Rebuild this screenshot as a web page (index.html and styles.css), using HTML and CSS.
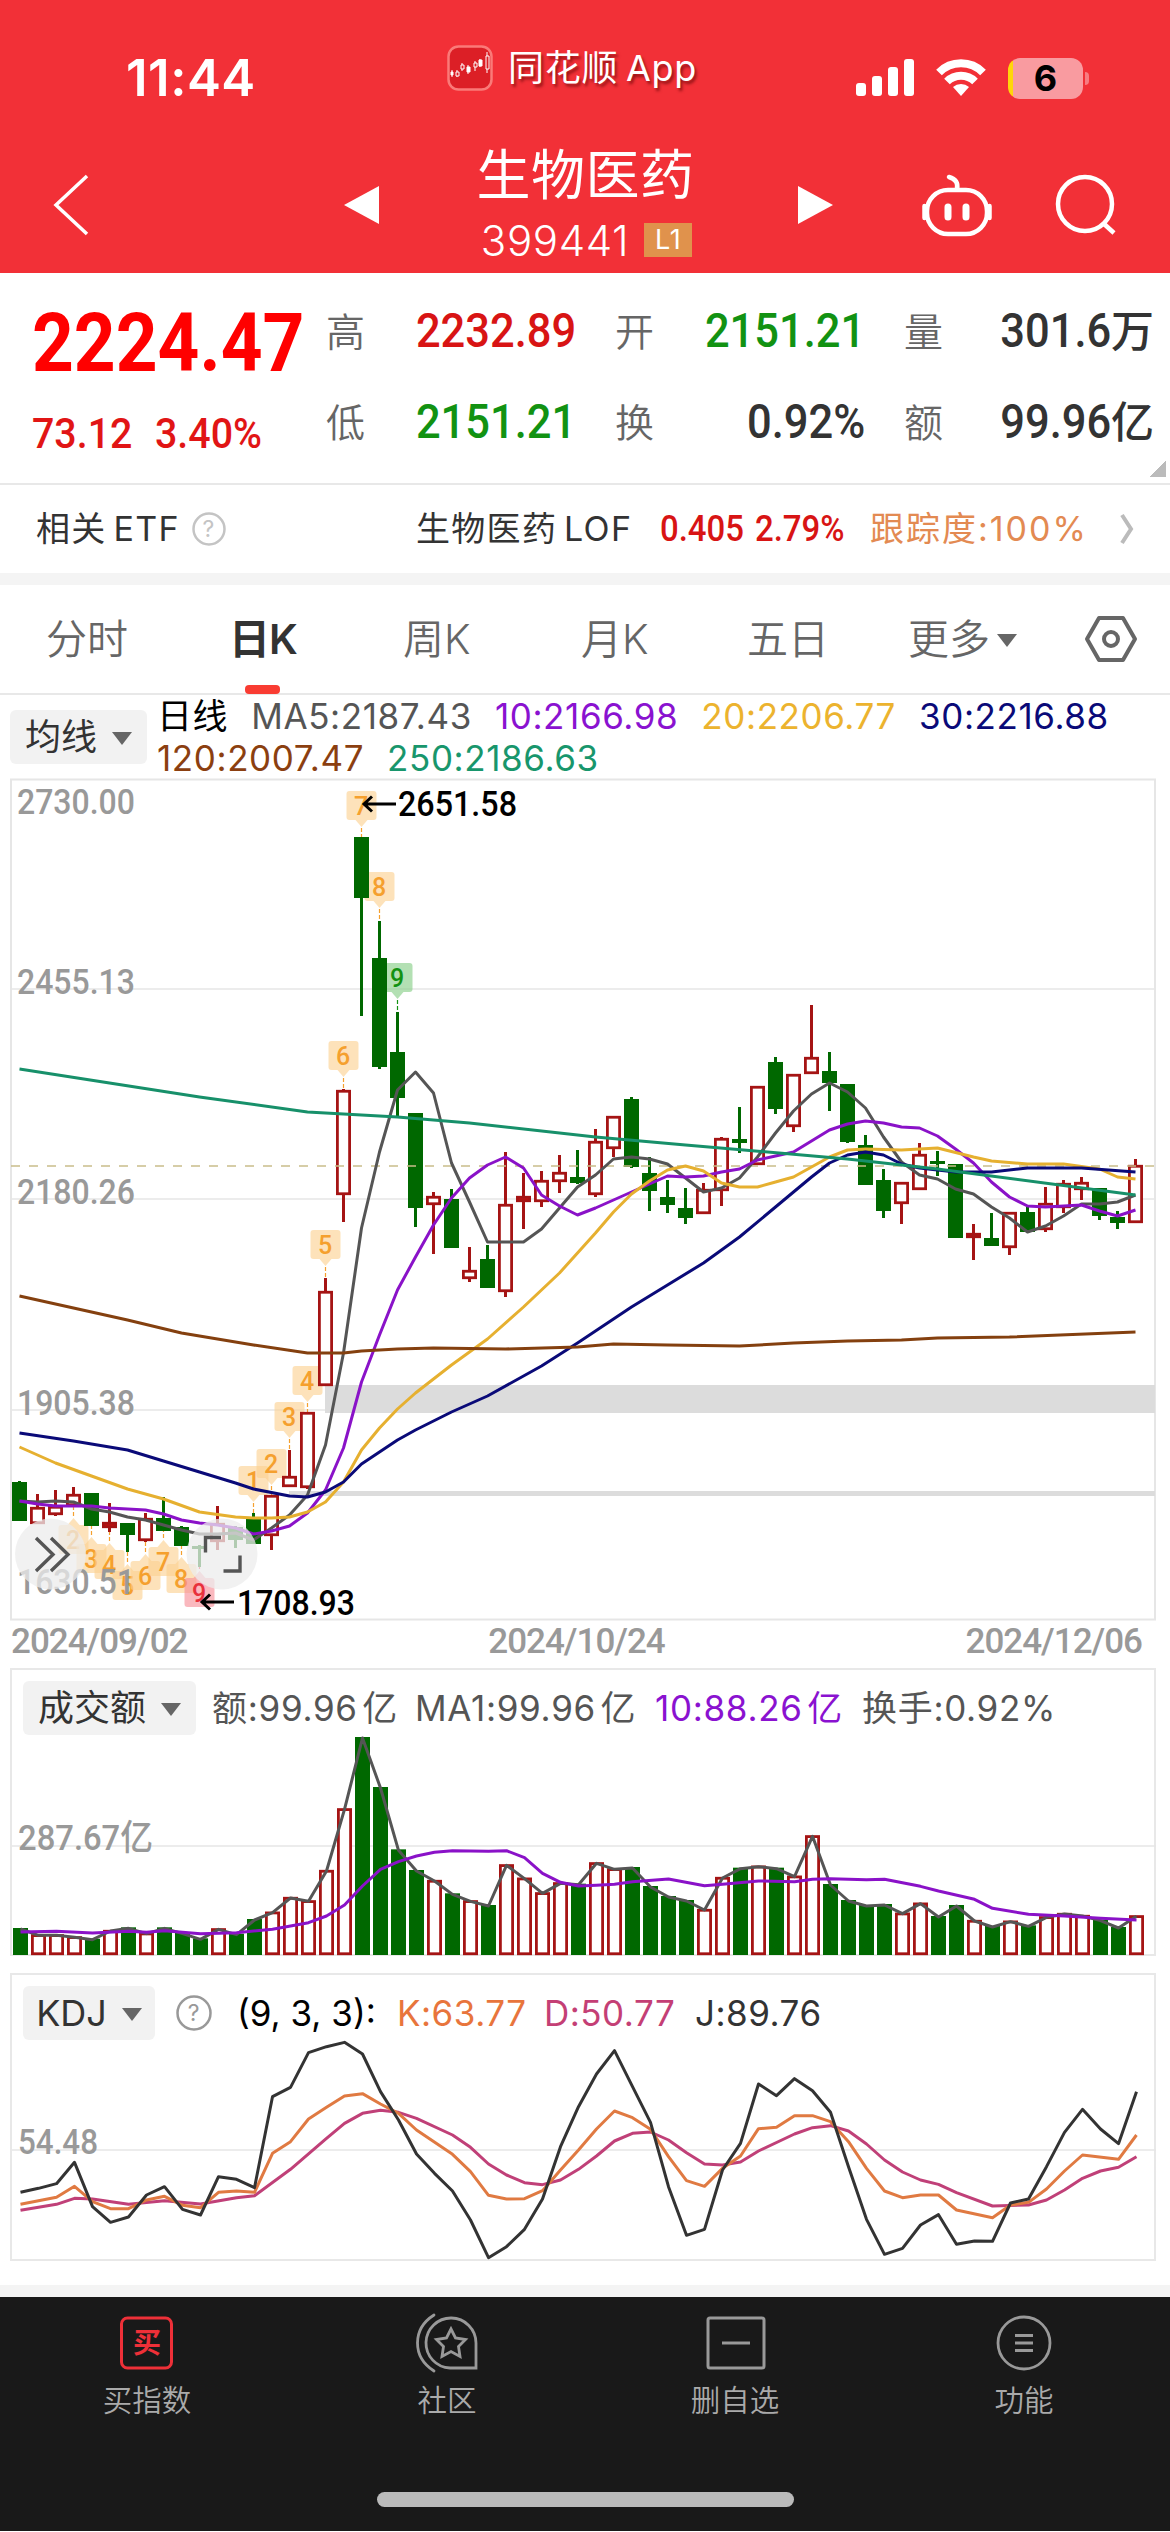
FILE: index.html
```html
<!DOCTYPE html>
<html lang="zh-CN">
<head>
    <meta charset="UTF-8">
    <meta name="viewport" content="width=device-width, initial-scale=1.0">
    <title>生物医药 399441</title>
    <link rel="stylesheet" href="styles.css">
</head>
<body>
    <header class="header">
        <div class="status">
            <span class="time">11:44</span>
            <div class="from-app">
                <svg width="46" height="46" viewBox="0 0 46 46">
                    <rect x="1.5" y="1.5" width="43" height="43" rx="10" fill="#dc1f26" stroke="#fa7a78" stroke-width="2.5"/>
                    <g stroke="#fff" stroke-width="1" fill="#fff">
                        <path d="M5 25v7M10 25v7M15 18v8M21 20v9M28 16v10M33 14v8M40 7v21" fill="none"/>
                        <path d="M4 27h2v3h-2zM20 22h3v5h-3zM32 15h3v6h-3z"/>
                        <path d="M9 27h3v4h-3zM14 20h3v4h-3zM27 18h3v4h-3zM39 11h3v13h-3z" fill="#dc1f26"/>
                    </g>
                </svg>
                <span>同花顺 App</span>
            </div>
            <div class="signals">
                <svg width="58" height="38" viewBox="0 0 58 38" fill="#fff">
                    <rect x="0" y="24" width="10" height="13" rx="3"/>
                    <rect x="16" y="17" width="10" height="20" rx="3"/>
                    <rect x="32" y="8" width="10" height="29" rx="3"/>
                    <rect x="48" y="0" width="10" height="37" rx="3"/>
                </svg>
                <svg width="50" height="38" viewBox="0 0 50 38" fill="none" stroke="#fff" stroke-width="8">
                    <path d="M3 13.500a31 31 0 0 1 44 0"/>
                    <path d="M11 22.500a20 20 0 0 1 28 0"/>
                    <path d="M25 37l-8-9a12 12 0 0 1 16 0z" fill="#fff" stroke="none"/>
                </svg>
                <div class="battery"><span>6</span></div>
            </div>
        </div>
        <nav class="nav">
            <svg class="back" width="36" height="62" viewBox="0 0 36 62" fill="none" stroke="#fff" stroke-width="3.500">
                <path d="M34 2L3 31l31 29"/>
            </svg>
            <svg class="prev" width="35" height="38" viewBox="0 0 35 38"><path d="M35 0v38L0 19z" fill="#fff"/></svg>
            <div class="title">
                <h1>生物医药</h1>
                <p><span>399441</span><em>L1</em></p>
            </div>
            <svg class="next" width="35" height="38" viewBox="0 0 35 38"><path d="M0 0v38L35 19z" fill="#fff"/></svg>
            <svg class="robot" width="70" height="64" viewBox="0 0 70 64" fill="none" stroke="#fff" stroke-width="4.500" stroke-linecap="round">
                <rect x="5" y="17" width="60" height="44" rx="21"/>
                <path d="M2.500 33v12M67.500 33v12M35 16q2-9-8-12"/>
                <path d="M26 34v10M44 34v10" stroke-width="7"/>
            </svg>
            <svg class="search" width="62" height="62" viewBox="0 0 62 62" fill="none" stroke="#fff" stroke-width="4.500">
                <circle cx="30" cy="30" r="27"/>
                <path d="M48 49l11 10"/>
            </svg>
        </nav>
    </header>

    <section class="quote">
        <div class="price">
            <strong class="num">2224.47</strong>
            <p><span class="num">73.12</span><span class="num">3.40%</span></p>
        </div>
        <dl class="stats">
            <div><dt>高</dt><dd class="up"><span class="num">2232.89</span></dd></div>
            <div><dt>开</dt><dd class="down"><span class="num">2151.21</span></dd></div>
            <div><dt>量</dt><dd><span class="num">301.6</span>万</dd></div>
            <div><dt>低</dt><dd class="down"><span class="num">2151.21</span></dd></div>
            <div><dt>换</dt><dd><span class="num">0.92%</span></dd></div>
            <div><dt>额</dt><dd><span class="num">99.96</span>亿</dd></div>
        </dl>
        <i class="corner"></i>
    </section>

    <section class="etf">
        <span class="etf-label">相关 ETF</span>
        <svg width="34" height="34" viewBox="0 0 34 34">
            <circle cx="17" cy="17" r="15.500" fill="none" stroke="#c4c4c4" stroke-width="2.500"/>
            <text x="17" y="25" class="help" fill="#c4c4c4">?</text>
        </svg>
        <span class="etf-name">生物医药 LOF</span>
        <span class="num etf-val">0.405</span>
        <span class="num etf-pct">2.79%</span>
        <span class="etf-track">跟踪度:100%</span>
        <svg class="go" width="14" height="30" viewBox="0 0 14 30" fill="none" stroke="#bbb" stroke-width="4"><path d="M2 1l9 14-9 14"/></svg>
    </section>

    <section class="tabs">
        <span>分时</span>
        <span class="active">日K</span>
        <span>周K</span>
        <span>月K</span>
        <span>五日</span>
        <span>更多<i class="caret"></i></span>
        <svg width="52" height="46" viewBox="0 0 52 46" fill="none" stroke="#666" stroke-width="4" stroke-linejoin="round">
            <path d="M14 2h24l12 21-12 21H14L2 23z"/>
            <circle cx="26" cy="23" r="7"/>
        </svg>
    </section>

    <section class="ma">
        <button class="pick">均线<i class="caret"></i></button>
        <div class="legend">
            <p><span class="c-black">日线</span><span class="c-gray">MA5:2187.43</span><span class="c-purple">10:2166.98</span><span class="c-gold">20:2206.77</span><span class="c-navy">30:2216.88</span></p>
            <p><span class="c-brown">120:2007.47</span><span class="c-green">250:2186.63</span></p>
        </div>
    </section>

    <svg id="kline" class="kline" width="1170" height="843" viewBox="0 778 1170 843"></svg>
    <div class="dates"><span>2024/09/02</span><span>2024/10/24</span><span>2024/12/06</span></div>

    <section class="panel volume">
        <div class="panel-head">
            <button class="pick">成交额<i class="caret"></i></button>
            <span class="c-gray v1">额:99.96 亿</span>
            <span class="c-gray v2">MA1:99.96 亿</span>
            <span class="c-purple v3">10:88.26 亿</span>
            <span class="c-gray">换手:0.92%</span>
        </div>
        <svg id="volume" width="1144" height="220" viewBox="11 1735 1144 220"></svg>
    </section>

    <section class="panel kdj">
        <div class="panel-head">
            <button class="pick">KDJ<i class="caret"></i></button>
            <svg class="ask" width="36" height="36" viewBox="0 0 36 36">
                <circle cx="18" cy="18" r="16.500" fill="none" stroke="#999" stroke-width="2.500"/>
                <text x="18" y="26" class="help" fill="#999">?</text>
            </svg>
            <span class="c-black k0">(9, 3, 3):</span>
            <span class="c-orange k1">K:63.77</span>
            <span class="c-pink k2">D:50.77</span>
            <span class="c-dark">J:89.76</span>
        </div>
        <svg id="kdj" width="1144" height="220" viewBox="11 2041 1144 220"></svg>
    </section>

    <footer class="tabbar">
        <a>
            <svg width="62" height="58" viewBox="0 0 62 58">
                <rect x="5.500" y="4" width="50" height="50" rx="6" fill="none" stroke="#ee3038" stroke-width="3"/>
                <text x="31" y="39" class="buy">买</text>
            </svg>
            <span>买指数</span>
        </a>
        <a>
            <svg width="62" height="58" viewBox="0 0 62 58" fill="none" stroke="#999" stroke-width="2.800">
                <path d="M60 54H34A25 25 0 1 1 60 29z"/>
                <path d="M18 1C-4 15-4 43 18 57" stroke-linecap="round"/>
                <path d="M35 15l4.500 9 10 1.500-7 7 1.500 10-9-5-9 5 1.500-10-7-7 10-1.500z"/>
            </svg>
            <span>社区</span>
        </a>
        <a>
            <svg width="62" height="58" viewBox="0 0 62 58" fill="none" stroke="#999" stroke-width="3">
                <rect x="4" y="4" width="56" height="50" rx="2"/>
                <path d="M18 29h28"/>
            </svg>
            <span>删自选</span>
        </a>
        <a>
            <svg width="62" height="58" viewBox="0 0 62 58" fill="none" stroke="#999" stroke-width="2.800">
                <circle cx="31" cy="29" r="26"/>
                <path d="M22 21.500h18M22 29h18M22 36.500h18"/>
            </svg>
            <span>功能</span>
        </a>
        <i class="home"></i>
    </footer>
    <script src="chart.js"></script>
</body>
</html>
```

FILE: styles.css
```css
* {
    box-sizing: border-box;
    margin: 0;
    padding: 0;
}

body {
    width: 1170px;
    height: 2532px;
    background: #fff;
    color: #333;
    font-family: Inter, "Noto Sans CJK SC", sans-serif;
    overflow: hidden;
}

svg {
    display: block;
    flex: none;
    overflow: visible;
}

i, em {
    font-style: normal;
}

.num {
    display: inline-block;
    font-family: Roboto, "Noto Sans CJK SC", sans-serif;
    transform: scaleX(0.915);
    transform-origin: left;
}

/* header */
.header {
    height: 273px;
    background: #f23037;
    color: #fff;
}

.status {
    display: grid;
    grid-template-columns: 447px 409px 1fr;
    height: 140px;
    padding-top: 44px;
}

.time {
    padding-left: 126px;
    font-size: 51px;
    font-weight: 600;
    line-height: 68px;
    letter-spacing: 0.5px;
}

.from-app {
    display: flex;
    align-items: center;
    gap: 15px;
    height: 48px;
    font-size: 36px;
    line-height: 48px;
    text-shadow: 2px 3px 3px rgba(90, 0, 0, 0.6);
    white-space: nowrap;
    word-spacing: -3px;
    letter-spacing: 0.7px;
}

.signals {
    display: flex;
    align-items: center;
    height: 68px;
    gap: 22px;
}

.battery {
    position: relative;
    width: 75px;
    height: 41px;
    border-radius: 12px;
    background: linear-gradient(90deg, #ffd60a 5px, #f99ba0 5px);
    color: #000;
    font-size: 36px;
    font-weight: 700;
    line-height: 41px;
    text-align: center;
}

.battery::after {
    content: "";
    position: absolute;
    left: 77px;
    top: 14px;
    width: 4px;
    height: 13px;
    border-radius: 0 4px 4px 0;
    background: #f77c81;
}

.nav {
    display: flex;
    align-items: center;
    height: 130px;
    padding-left: 53px;
}

.prev {
    margin-left: 255px;
}

.title {
    width: 419px;
    margin-top: -2px;
    text-align: center;
}

.title h1 {
    font-size: 54px;
    font-weight: 400;
    line-height: 66px;
    letter-spacing: 0.5px;
    margin-left: -6px;
}

.title p {
    display: flex;
    justify-content: center;
    align-items: center;
    gap: 15px;
    height: 56px;
    margin-left: -4px;
    padding-top: 6px;
    font-size: 42px;
    font-weight: 300;
    letter-spacing: 0.6px;
}

.title em {
    width: 48px;
    height: 34px;
    background: #e0924c;
    font-size: 27px;
    font-weight: 400;
    line-height: 34px;
}

.robot {
    margin-left: 89px;
}

.search {
    margin-left: 63px;
}

/* quote */
.quote {
    position: relative;
    display: flex;
    height: 212px;
    border-bottom: 2px solid #e8e8e8;
}

.price {
    width: 326px;
    padding: 17px 0 0 32px;
    color: #f00;
}

.price strong {
    font-size: 82px;
    line-height: 106px;
    transform: scaleX(0.89);
}

.price p {
    display: flex;
    gap: 13px;
    margin-top: 7px;
    color: #e11515;
    font-size: 43px;
    font-weight: 500;
    line-height: 60px;
}

.stats {
    display: grid;
    grid-template-columns: repeat(3, 250px);
    column-gap: 39px;
    padding-top: 13px;
    align-content: start;
}

.stats div {
    display: flex;
    justify-content: space-between;
    height: 91px;
    line-height: 91px;
    white-space: nowrap;
}

.stats dt {
    color: #666;
    font-size: 39px;
    font-weight: 350;
}

.stats dd {
    font-size: 43px;
    font-weight: 500;
}

.stats .num {
    font-size: 47.5px;
    transform-origin: right;
}

.up {
    color: #d81414;
}

.down {
    color: #129212;
}

.corner {
    position: absolute;
    right: 4px;
    bottom: 6px;
    width: 16px;
    height: 16px;
    background: linear-gradient(135deg, transparent 50%, #bbb 50%);
}

/* etf */
.etf {
    display: flex;
    align-items: center;
    height: 100px;
    padding-left: 36px;
    border-bottom: 12px solid #f4f4f4;
    font-size: 34px;
    line-height: 50px;
    white-space: nowrap;
    word-spacing: -4px;
    letter-spacing: 1.3px;
}

.etf-label {
    width: 156px;
}

.help {
    font-size: 23px;
    text-anchor: middle;
}

.etf-name {
    width: 244px;
    margin-left: 190px;
}

.etf-val,
.etf-pct {
    width: 95px;
    color: #d81414;
    font-size: 36px;
    font-weight: 500;
    letter-spacing: 0;
}

.etf-pct {
    width: 115px;
}

.etf-track {
    width: 250px;
    color: #e38a52;
    letter-spacing: 2px;
}

/* tabs */
.tabs {
    display: flex;
    align-items: center;
    height: 110px;
    padding-left: 46px;
    border-bottom: 2px solid #e8e8e8;
    color: #666;
    font-size: 41px;
    font-weight: 350;
    white-space: nowrap;
}

.tabs span {
    flex: none;
    width: 174px;
    line-height: 109px;
}

.tabs span:nth-child(1) {
    width: 183px;
}

.tabs span:nth-child(3) {
    width: 178px;
}

.tabs span:nth-child(4) {
    width: 166px;
}

.tabs span:nth-child(5) {
    width: 161px;
}

.tabs span:nth-child(6) {
    width: 177px;
}

.tabs .active {
    position: relative;
    color: #333;
    font-weight: 600;
    letter-spacing: -1px;
}

.active::after {
    content: "";
    position: absolute;
    left: 16px;
    bottom: 0;
    width: 35px;
    height: 9px;
    border-radius: 4px;
    background: #f93c32;
}

.caret {
    display: inline-block;
    border: 10px solid transparent;
    border-top: 13px solid #666;
    border-bottom: 0;
    margin-left: 7px;
    vertical-align: 7px;
}

.pick {
    flex: none;
    height: 54px;
    border: 0;
    border-radius: 6px;
    background: #f2f2f2;
    color: #333;
    font: 36px/54px Inter, "Noto Sans CJK SC", sans-serif;
    white-space: nowrap;
}

.pick .caret {
    margin-left: 15px;
    vertical-align: 5px;
}

/* ma legend */
.ma {
    display: flex;
    height: 83px;
    padding-left: 10px;
    font-size: 35px;
    white-space: nowrap;
    letter-spacing: 0.6px;
}

.ma .pick {
    width: 137px;
    margin-top: 15px;
}

.legend {
    padding-left: 10px;
}

.legend p {
    display: flex;
    gap: 23px;
    height: 42px;
    line-height: 42px;
}

.c-black { color: #000; }
.c-gray { color: #555; }
.c-purple { color: #8a12d0; }
.c-gold { color: #ecb32e; }
.c-navy { color: #0a0a78; }
.c-brown { color: #8b3f10; }
.c-green { color: #18966c; }
.c-orange { color: #e8753c; }
.c-pink { color: #c43f75; }
.c-dark { color: #333; }

.axis {
    font: 500 35px Roboto, "Noto Sans CJK SC", sans-serif;
    fill: #999;
}

.mark {
    font: 500 35px Roboto, sans-serif;
    fill: #000;
}

.badge {
    font: 500 25px Roboto, sans-serif;
    text-anchor: middle;
}

.dates {
    display: flex;
    justify-content: space-between;
    height: 47px;
    padding: 0 28px 0 11px;
    color: #999;
    font: 500 35px/41px Roboto, sans-serif;
    letter-spacing: -1px;
}

/* volume and kdj */
.panel {
    width: 1146px;
    height: 288px;
    margin: 0 0 17px 10px;
    border: 2px solid #e8e8e8;
}

.panel-head {
    display: flex;
    height: 66px;
    padding: 11px 0 0 11px;
    font-size: 35px;
    line-height: 54px;
    white-space: nowrap;
    word-spacing: -6px;
    letter-spacing: 0.7px;
}

.volume .pick {
    width: 173px;
    margin-right: 16px;
}

.v1 {
    width: 203px;
}

.v2 {
    width: 240px;
}

.v3 {
    width: 207px;
}

.kdj {
    margin-bottom: 24px;
}

.kdj .panel-head {
    word-spacing: 0;
    letter-spacing: 0.5px;
}

.kdj .pick {
    width: 132px;
}

.ask {
    margin: 9px 25px 0 21px;
}

.k0 {
    width: 160px;
    letter-spacing: 0;
}

.k1 {
    width: 147px;
}

.k2 {
    width: 151px;
}

/* tab bar */
.tabbar {
    position: relative;
    display: grid;
    grid-template-columns: 294px 306px 270px 1fr;
    height: 246px;
    border-top: 12px solid #f4f4f4;
    background: #191919;
    color: #aaa;
    font-size: 29.5px;
    font-weight: 350;
}

.tabbar a {
    display: flex;
    flex-direction: column;
    align-items: center;
    padding-top: 17px;
}

.tabbar a:last-of-type {
    padding-left: 8px;
}

.tabbar span {
    line-height: 56px;
}

.buy {
    font-size: 28px;
    font-weight: 700;
    fill: #ee3038;
    text-anchor: middle;
}

.home {
    position: absolute;
    left: 377px;
    top: 195px;
    width: 417px;
    height: 15px;
    border-radius: 8px;
    background: #bababa;
}
```

FILE: chart.js
```js
// One column per trading day
const x = i => 19.5 + 18 * i;

// [up, high, body top, body bottom, low]
const candles = [
    [0, 1481, 1482, 1521, 1521], [1, 1494, 1508, 1523, 1523], [1, 1490, 1507, 1514, 1516], [1, 1487, 1495, 1505, 1506],
    [0, 1493, 1493, 1526, 1526], [1, 1503, 1523, 1527, 1532], [0, 1523, 1523, 1535, 1552], [1, 1513, 1519, 1540, 1542],
    [0, 1497, 1518, 1531, 1531], [0, 1526, 1527, 1546, 1546], [0, 1545, 1546, 1549, 1567], [1, 1506, 1524, 1541, 1550],
    [0, 1526, 1527, 1540, 1548], [0, 1513, 1519, 1544, 1544], [1, 1496, 1496, 1535, 1550], [1, 1450, 1477, 1486, 1486],
    [1, 1413, 1413, 1487, 1489], [1, 1278, 1292, 1385, 1385], [1, 1089, 1091, 1194, 1222], [0, 837, 837, 898, 1016],
    [0, 921, 958, 1067, 1069], [0, 1012, 1052, 1098, 1116], [0, 1113, 1113, 1208, 1227], [1, 1192, 1197, 1204, 1254],
    [0, 1189, 1199, 1248, 1248], [1, 1247, 1271, 1278, 1282], [0, 1245, 1259, 1288, 1288], [1, 1152, 1205, 1291, 1297],
    [1, 1173, 1197, 1201, 1229], [1, 1171, 1181, 1201, 1207], [1, 1155, 1173, 1181, 1193], [0, 1150, 1177, 1183, 1184],
    [1, 1129, 1142, 1194, 1197], [1, 1116, 1117, 1148, 1157], [0, 1097, 1099, 1167, 1168], [0, 1157, 1173, 1191, 1211],
    [0, 1180, 1197, 1205, 1213], [0, 1188, 1208, 1218, 1224], [1, 1183, 1190, 1213, 1213], [1, 1137, 1139, 1190, 1206],
    [0, 1107, 1139, 1143, 1153], [1, 1086, 1087, 1164, 1164], [0, 1057, 1062, 1109, 1114], [1, 1074, 1075, 1126, 1132],
    [1, 1005, 1058, 1073, 1074], [0, 1052, 1071, 1083, 1111], [0, 1084, 1084, 1142, 1143], [0, 1135, 1145, 1185, 1185],
    [0, 1169, 1180, 1211, 1218], [1, 1183, 1183, 1203, 1224], [1, 1143, 1155, 1189, 1189], [0, 1151, 1161, 1164, 1176],
    [0, 1164, 1164, 1238, 1238], [1, 1224, 1234, 1237, 1260], [0, 1213, 1238, 1246, 1246], [1, 1213, 1213, 1247, 1255],
    [0, 1207, 1212, 1232, 1232], [1, 1187, 1204, 1229, 1232], [1, 1180, 1184, 1207, 1213], [1, 1177, 1183, 1189, 1200],
    [0, 1188, 1188, 1216, 1220], [0, 1211, 1217, 1223, 1229], [1, 1159, 1166, 1222, 1222]
];

const ma5 = [1501, 1502, 1501, 1502, 1509, 1512, 1517, 1520, 1525, 1530, 1534, 1534, 1533, 1540, 1528, 1515, 1495, 1445, 1353, 1228, 1152, 1090, 1072, 1093, 1163, 1202, 1242, 1242, 1242, 1229, 1208, 1187, 1175, 1159, 1157, 1159, 1164, 1178, 1192, 1188, 1178, 1157, 1133, 1111, 1094, 1083, 1092, 1108, 1137, 1162, 1175, 1179, 1189, 1194, 1207, 1218, 1232, 1226, 1216, 1204, 1204, 1202, 1195];
const ma10 = [1501, 1504, 1506, 1506, 1506, 1508, 1509, 1510, 1514, 1520, 1523, 1525, 1528, 1534, 1531, 1526, 1513, 1490, 1448, 1382, 1335, 1290, 1257, 1225, 1198, 1178, 1165, 1157, 1168, 1195, 1206, 1215, 1208, 1200, 1192, 1184, 1176, 1177, 1176, 1172, 1169, 1160, 1156, 1152, 1141, 1130, 1124, 1121, 1123, 1127, 1128, 1136, 1149, 1163, 1182, 1197, 1206, 1207, 1206, 1205, 1211, 1216, 1210];

// slower averages are stored as [day, y]
const ma20 = [[0, 1447], [2, 1463], [4, 1476], [6, 1489], [8, 1499], [10, 1512], [12, 1517], [13, 1518], [14, 1518], [15, 1517], [16, 1512], [17, 1502], [18, 1482], [19, 1450], [20, 1428], [21, 1409], [22, 1393], [24, 1365], [26, 1339], [28, 1307], [30, 1273], [31, 1253], [32, 1233], [33, 1212], [34, 1194], [35, 1181], [36, 1170], [37, 1166], [38, 1171], [39, 1183], [40, 1187], [41, 1187], [42, 1182], [43, 1177], [44, 1167], [45, 1157], [46, 1150], [47, 1149], [49, 1150], [51, 1148], [53, 1157], [54, 1161], [56, 1164], [58, 1164], [60, 1169], [61, 1177], [62, 1179]];
const ma30 = [[0, 1433], [3, 1441], [6, 1450], [8, 1461], [10, 1472], [12, 1483], [13, 1489], [15, 1496], [16, 1497], [17, 1492], [18, 1482], [19, 1464], [21, 1440], [22, 1430], [24, 1412], [26, 1396], [29, 1366], [31, 1343], [34, 1307], [36, 1285], [38, 1263], [40, 1237], [42, 1207], [44, 1177], [45, 1163], [46, 1155], [47, 1152], [48, 1155], [49, 1164], [50, 1168], [52, 1172], [54, 1172], [56, 1168], [59, 1168], [62, 1172]];
const ma120 = [[0, 1296], [6, 1320], [9, 1333], [13, 1345], [16, 1353], [18, 1353], [19, 1351], [21, 1349], [23, 1348], [27, 1349], [31, 1347], [33, 1344], [36, 1345], [40, 1346], [43, 1343], [46, 1341], [49, 1340], [51, 1338], [55, 1337], [62, 1332]];
const ma250 = [[0, 1069], [5, 1083], [10, 1097], [16, 1112], [18, 1114], [21, 1117], [25, 1123], [32, 1137], [37, 1145], [46, 1159], [51, 1169], [62, 1195]];

// [day, box top, digit, colour]
const orange = ["#fbd08f", "#f5a02e"];
const above = [[13, 1466, 1, orange], [14, 1449, 2, orange], [15, 1402, 3, orange], [16, 1366, 4, orange], [17, 1230, 5, orange], [18, 1041, 6, orange], [19, 791, 7, orange], [20, 872, 8, orange], [21, 963, 9, ["#84cd84", "#129212"]]];
const below = [[3, 1525, 2, orange], [4, 1544, 3, orange], [5, 1550, 4, orange], [6, 1571, 5, orange], [7, 1561, 6, orange], [8, 1547, 7, orange], [9, 1564, 8, orange], [10, 1578, 9, ["#f78c96", "#e8303c"]]];

// offsets from the panel origin, in thirds of a pixel
const vol = [831, 850, 850, 856, 863, 837, 829, 845, 829, 845, 862, 832, 848, 804, 782, 738, 748, 657, 472, 258, 408, 595, 657, 687, 727, 748, 762, 640, 680, 724, 694, 698, 634, 652, 648, 705, 735, 747, 774, 678, 650, 644, 650, 674, 553, 699, 747, 762, 759, 785, 755, 795, 762, 807, 825, 809, 823, 796, 786, 792, 806, 828, 793];
const vol10 = [[0, 843], [2, 841], [4, 846], [6, 841], [7, 844], [8, 839], [10, 848], [12, 845], [14, 835], [16, 815], [17, 795], [18, 762], [19, 705], [20, 655], [21, 632], [22, 615], [23, 604], [24, 599], [26, 601], [27, 599], [28, 620], [29, 667], [30, 694], [31, 705], [32, 703], [33, 700], [34, 692], [36, 684], [38, 704], [39, 700], [41, 690], [43, 692], [44, 685], [45, 683], [47, 686], [48, 685], [50, 706], [51, 720], [53, 745], [54, 772], [56, 790], [58, 795], [60, 802], [62, 807]];
const j = [697, 685, 671, 607, 740, 787, 771, 705, 680, 748, 765, 650, 658, 683, 410, 382, 278, 260, 247, 282, 395, 480, 582, 640, 693, 780, 893, 860, 808, 717, 560, 440, 342, 272, 380, 487, 680, 826, 808, 630, 550, 372, 407, 356, 392, 457, 620, 778, 883, 865, 795, 764, 853, 843, 844, 729, 717, 620, 517, 448, 507, 551, 395];
const k = [[0, 733], [2, 712], [3, 679], [4, 725], [5, 746], [6, 746], [7, 720], [8, 709], [9, 736], [10, 743], [11, 697], [12, 693], [13, 697], [14, 580], [15, 545], [16, 477], [17, 442], [18, 408], [19, 401], [20, 432], [21, 460], [22, 510], [24, 583], [25, 635], [26, 706], [27, 717], [28, 716], [29, 692], [30, 630], [31, 570], [32, 507], [33, 453], [34, 473], [35, 508], [36, 590], [37, 662], [38, 679], [39, 625], [40, 588], [41, 506], [42, 502], [43, 467], [44, 467], [45, 485], [46, 545], [47, 625], [48, 693], [49, 713], [50, 705], [51, 705], [52, 750], [54, 773], [55, 735], [56, 727], [57, 687], [58, 633], [59, 585], [61, 598], [62, 525]];
const d = [[0, 751], [2, 733], [3, 715], [4, 717], [6, 733], [8, 722], [10, 732], [12, 713], [13, 707], [15, 628], [17, 535], [18, 490], [19, 460], [20, 451], [21, 457], [22, 475], [24, 525], [25, 562], [26, 612], [27, 645], [28, 668], [29, 674], [30, 660], [31, 628], [32, 588], [33, 543], [34, 520], [35, 516], [36, 540], [37, 578], [38, 612], [39, 615], [40, 606], [41, 573], [43, 522], [44, 503], [45, 497], [46, 513], [47, 552], [48, 600], [49, 636], [50, 660], [51, 673], [52, 698], [54, 738], [56, 735], [57, 720], [58, 690], [59, 655], [60, 633], [61, 622], [62, 590]];

function line(points, color, toY = v => v, width = 3) {
    const path = points.map((p, i) => Array.isArray(p) ? x(p[0]) + "," + toY(p[1]) : x(i) + "," + toY(p)).join(" ");
    return `<polyline points="${path}" fill="none" stroke="${color}" stroke-width="${width}" stroke-linejoin="round"/>`;
}

function grid(y) {
    return `<path d="M11 ${y}H1155" stroke="#e6e6e6" stroke-width="1.5"/>`;
}

function label(text, px, y, width, cls = "axis") {
    return `<text class="${cls}" x="${px}" y="${y}" textLength="${width}" lengthAdjust="spacingAndGlyphs">${text}</text>`;
}

function bar(i, up, top, bottom) {
    if (up) {
        return `<rect x="${x(i) - 6.1}" y="${top + 0.25}" width="12.2" height="${Math.max(bottom - top - 0.5, 2)}" fill="${bottom - top < 5 ? "#d01010" : "#fff"}" stroke="#a51414" stroke-width="2.8"/>`;
    }
    return `<rect x="${x(i) - 7.5}" y="${top}" width="15" height="${bottom - top}" fill="#006800"/>`;
}

function candle([up, high, top, bottom, low], i) {
    return `<path d="M${x(i)} ${high}V${low}" stroke="${up ? "#a51414" : "#006800"}" stroke-width="3"/>` + bar(i, up, top, bottom);
}

function badge([i, top, digit, color], under) {
    const cx = x(i);
    const tip = under ? `M${cx - 6} ${top}l6-7 6 7z` : `M${cx - 6} ${top + 29}l6 7 6-7z`;
    const dash = under ? `M${cx} ${top - 9}v-10` : `M${cx} ${top + 37}v10`;
    return `<g fill="${color[0]}" fill-opacity=".62"><rect x="${cx - 15}" y="${top}" width="30" height="29" rx="3"/><path d="${tip}"/></g>` +
        `<path d="${dash}" stroke="${color[1]}" stroke-width="1.2" stroke-dasharray="4 2"/>` +
        `<text class="badge" x="${cx - 0.5}" y="${top + 24}" fill="${color[1]}">${digit}</text>`;
}

document.getElementById("kline").innerHTML =
    `<rect x="11" y="779.500" width="1144" height="840" fill="none" stroke="#e6e6e6" stroke-width="2"/>` +
    grid(989) + grid(1199) + grid(1410) +
    `<path d="M325 1385H1155V1413H325zM289 1491H1155V1496H289z" fill="#dcdcdc"/>` +
    below.map(b => badge(b, true)).join("") +
    above.map(b => badge(b, false)).join("") +
    candles.map(candle).join("") +
    `<path d="M11 1166H1155" stroke="#c9bd8a" stroke-width="1.6" stroke-dasharray="9 9"/>` +
    line(ma5, "#555") + line(ma10, "#8a12c8") + line(ma20, "#e6b030") +
    line(ma30, "#0a0a78") + line(ma120, "#84400f") + line(ma250, "#17906a") +
    label("2730.00", 17, 814, 118) + label("2455.13", 17, 994, 118) + label("2180.26", 17, 1204, 118) +
    label("1905.38", 17, 1415, 118) + label("1630.51", 17, 1594, 118) +
    `<circle cx="50.500" cy="1554" r="35.500" fill="#ececec" fill-opacity=".75"/>` +
    `<circle cx="222" cy="1554" r="35.500" fill="#ececec" fill-opacity=".75"/>` +
    `<path d="M36 1538l17 16.500-17 16.500M51 1538l17 16.500-17 16.500M205.500 1552.500v-15H221M240 1555.500v15.500h-16.500" fill="none" stroke="#555" stroke-width="3.400"/>` +
    label("2651.58", 398, 816, 119, "mark") + label("1708.93", 237, 1615, 118, "mark") +
    `<path d="M396 804H364M372 796.500l-8 7.500 8 7.500M234 1602H202M210 1594.500l-8 7.500 8 7.500" fill="none" stroke="#000" stroke-width="3"/>`;

const vy = v => 1650 + v / 3;
document.getElementById("volume").innerHTML =
    grid(1845) +
    vol.map((v, i) => bar(i, candles[i][0], vy(v) + (candles[i][0] ? 1 : 0), candles[i][0] ? 1953 : 1954)).join("") +
    line(vol, "#555", v => vy(v) + 1) + line(vol10, "#8a12c8", vy) +
    label("287.67亿", 17, 1849, 135);

const ky = v => 1960 + v / 3;
document.getElementById("kdj").innerHTML =
    grid(2150) + line(d, "#c04078", ky) + line(k, "#e07a42", ky) + line(j, "#333", ky) +
    label("54.48", 17, 2154, 80);
```
